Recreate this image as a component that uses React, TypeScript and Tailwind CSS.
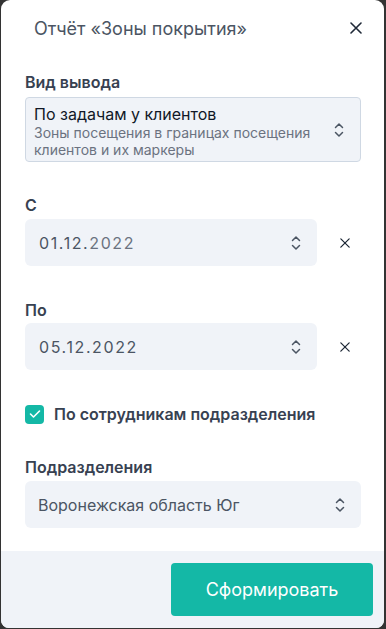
import React from "react";

const Chevrons = () => (
  <svg width="10" height="16" viewBox="0 0 10 16" fill="none" stroke="#4b5563" strokeWidth="1.5" strokeLinecap="round" strokeLinejoin="round">
    <path d="M1.5 5.5 L5 2 L8.5 5.5" />
    <path d="M1.5 10.5 L5 14 L8.5 10.5" />
  </svg>
);

const Cross = ({ size, sw }: { size: number; sw: number }) => (
  <svg width={size} height={size} viewBox="0 0 12 12" fill="none" stroke="#1f2937" strokeWidth={sw} strokeLinecap="round">
    <path d="M1 1 L11 11 M11 1 L1 11" />
  </svg>
);

const Label = ({ children, className = "" }: { children: React.ReactNode; className?: string }) => (
  <div className={"text-[16px] leading-[20px] font-semibold text-[#374151] " + className}>{children}</div>
);

const DateRow = ({ a, b, bColor }: { a: string; b: string; bColor: string }) => (
  <div className="flex items-center">
    <div className="w-[292px] h-[47px] rounded-md bg-[#f0f3f8] flex items-center justify-between pl-[14px] pr-[16px]">
      <span className="text-[16px] text-[#4b5563] tracking-[1.6px]">
        {a}
        <span className={bColor}>{b}</span>
      </span>
      <Chevrons />
    </div>
    <div className="flex-1 flex justify-center pl-[12px]">
      <Cross size={10} sw={1.5} />
    </div>
  </div>
);

export default function App() {
  return (
    <div className="w-[386px] h-[629px] bg-[#333333] flex" style={{ fontFamily: "Inter, 'Noto Sans', sans-serif" }}>
      <div className="ml-[1px] w-[383px] h-[628px] bg-white rounded-t-[9px] rounded-b-[8px] overflow-hidden flex flex-col">
        <div className="h-[56px] flex items-center justify-between pl-[33px] pr-[22px]">
          <span className="text-[18px] text-[#4b5563]">Отчёт «Зоны покрытия»</span>
          <Cross size={12} sw={1.6} />
        </div>
        <div className="flex-1 px-6">
          <Label className="mt-[16px]">Вид вывода</Label>
          <div className="mt-[5px] w-[336px] h-[65px] rounded-[4px] border border-[#cfd8e3] bg-[#f0f3f8] flex items-center justify-between pl-[8px] pr-[16px]">
            <div className="flex flex-col mt-[2px]">
              <span className="text-[16px] leading-[20px] text-[#111827]">По задачам у клиентов</span>
              <span className="text-[14px] leading-[17px] text-[#6b7280]">Зоны посещения в границах посещения</span>
              <span className="text-[14px] leading-[17px] text-[#6b7280]">клиентов и их маркеры</span>
            </div>
            <Chevrons />
          </div>
          <Label className="mt-[33px]">С</Label>
          <div className="mt-[4px]">
            <DateRow a="01.12." b="2022" bColor="text-[#6b7280]" />
          </div>
          <Label className="mt-[34px]">По</Label>
          <div className="mt-[3px]">
            <DateRow a="05.12." b="2022" bColor="text-[#4b5563]" />
          </div>
          <div className="mt-[32px] flex items-center gap-[10px]">
            <div className="w-[19px] h-[19px] rounded-[4px] bg-[#14b8a6] flex items-center justify-center">
              <svg width="12" height="10" viewBox="0 0 12 10" fill="none" stroke="white" strokeWidth="1.6" strokeLinecap="round" strokeLinejoin="round">
                <path d="M1.5 5 L4.5 8 L10.5 2" />
              </svg>
            </div>
            <span className="text-[16px] font-semibold text-[#374151]">По сотрудникам подразделения</span>
          </div>
          <Label className="mt-[31px]">Подразделения</Label>
          <div className="mt-[4px] w-[336px] h-[47px] rounded-md bg-[#f0f3f8] flex items-center justify-between pl-[13px] pr-[16px]">
            <span className="text-[16px] text-[#4b5563]">Воронежская область Юг</span>
            <Chevrons />
          </div>
        </div>
        <div className="h-[77px] bg-[#f0f3f8] flex justify-end pt-[12px] pr-[11px]">
          <button className="w-[202px] h-[53px] rounded-[4px] bg-[#14b8a6] text-white text-[18px]">Сформировать</button>
        </div>
      </div>
    </div>
  );
}
